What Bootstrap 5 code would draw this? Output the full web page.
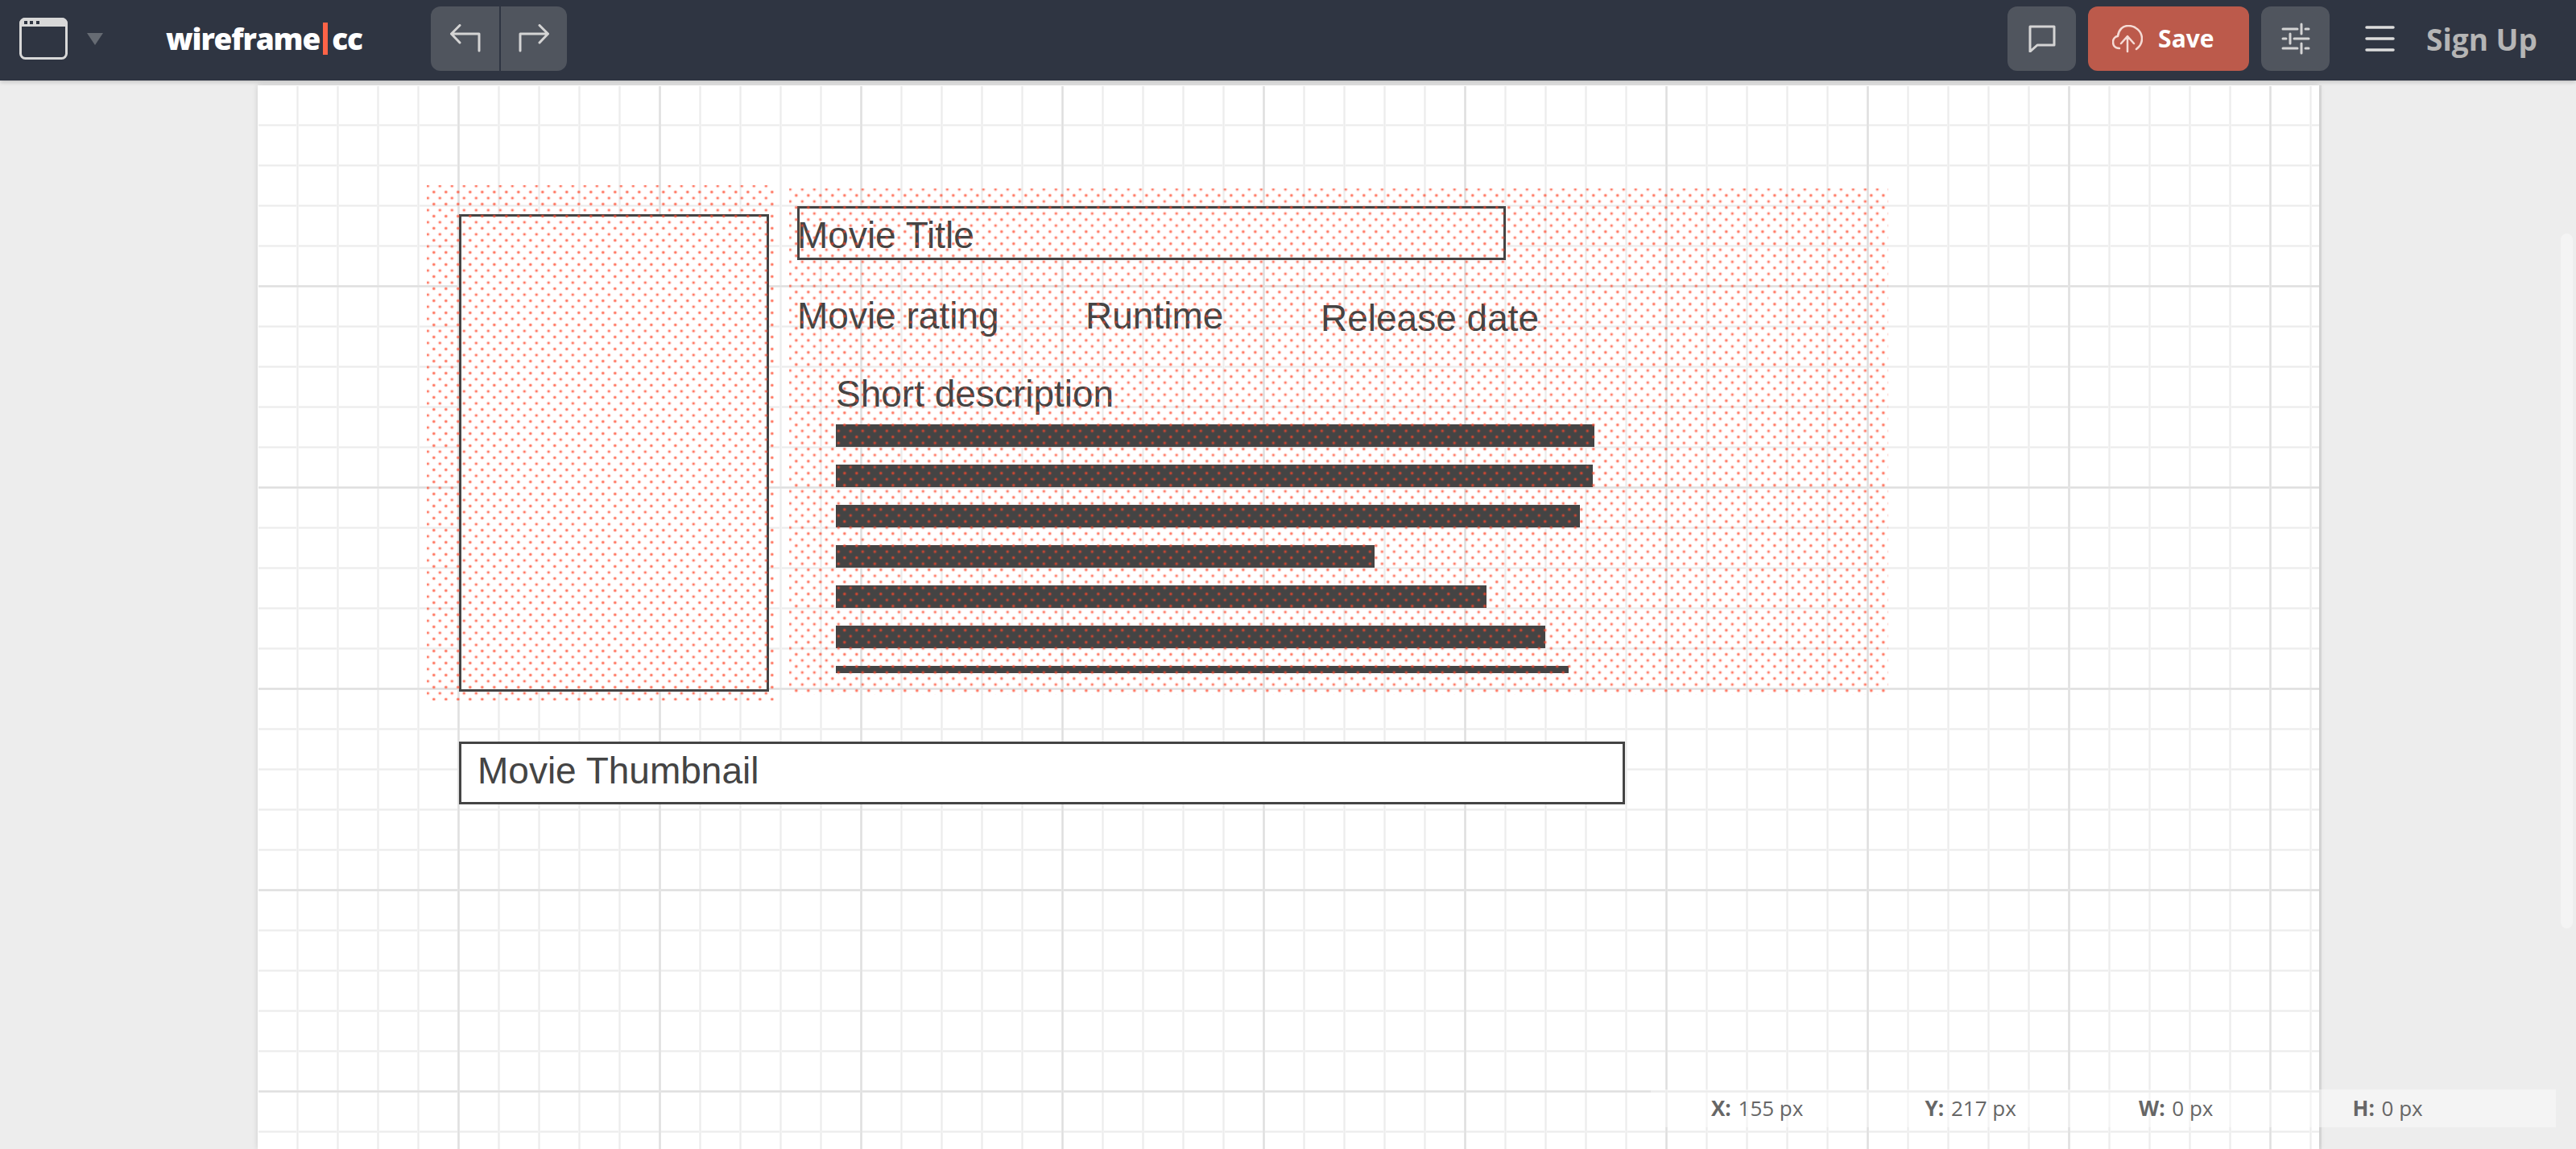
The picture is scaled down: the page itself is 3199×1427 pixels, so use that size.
<!doctype html>
<html lang="en">
<head>
<meta charset="utf-8">
<title>wireframe.cc</title>
<link href="https://cdn.jsdelivr.net/npm/bootstrap@5.3.0/dist/css/bootstrap.min.css" rel="stylesheet">
<style>
html,body{height:100%;overflow:hidden}
body{background:#ededed;font-family:"Open Sans",sans-serif;position:relative}
.topbar{height:100px;background:#2f3542;padding:0 48px 4px 24px;box-shadow:0 2px 5px rgba(0,0,0,.18);position:relative;z-index:3}
.win-icon{width:60px;height:52px;display:block}
.caret-tri{width:0;height:0;border-left:10px solid transparent;border-right:10px solid transparent;border-top:15px solid #666b73;margin-left:24px}
.logo{font-family:"Open Sans",sans-serif;font-weight:800;font-size:37px;line-height:40px;color:#fff;margin-left:78px;width:329px;letter-spacing:-1.15px;display:flex;align-items:center}
.logo-bar{display:inline-block;width:6px;height:40px;background:#ff6347;margin:0 5px 0 4px}
.tbtn{height:80px;width:85px;padding:0;border:0;border-radius:12px;background:#50555e;display:flex;align-items:center;justify-content:center}
.tbtn:hover{background:#50555e}
.undo-group{gap:3px}
.undo-group .tbtn:first-child{border-radius:12px 0 0 12px}
.undo-group .tbtn:last-child{border-radius:0 12px 12px 0;width:82px;margin-left:0}
.right-tools{gap:15px}
.save-btn{width:200px;height:80px;padding:0 0 0 30px;border:0;border-radius:12px;background:#bc5a4b;color:#fff;font-weight:700;font-size:30px;line-height:1;display:flex;align-items:center;gap:19px;justify-content:flex-start}
.save-btn:hover{background:#bc5a4b;color:#fff}
.burger{margin-left:29px;width:37px;height:32px;display:block}
.signup{margin-left:24px;color:#b5b5b5;font-weight:700;font-size:37px;line-height:1}
.icon-line{fill:none;stroke:#d4d4d4;stroke-width:3;stroke-linecap:round;stroke-linejoin:round}
.stage{height:1327px;position:relative}
.paper{position:absolute;left:320px;top:6px;width:2560px;height:1321px;background:#fff;box-shadow:0 0 7px rgba(0,0,0,.14),3px 0 0 #dedede;overflow:hidden}
.paper-grid{position:absolute;left:1px;top:1px;right:0;bottom:0;background-image:
 linear-gradient(to right,#e6e6e6 0 1px,#dfdfdf 1px 2px,#e6e6e6 2px 3px,transparent 3px),
 linear-gradient(to bottom,#e6e6e6 0 1px,#dfdfdf 1px 2px,#e6e6e6 2px 3px,transparent 3px),
 linear-gradient(to right,#f3f3f3 0 1px,#ececec 1px 2px,#f3f3f3 2px 3px,transparent 3px),
 linear-gradient(to bottom,#f3f3f3 0 1px,#ececec 1px 2px,#f3f3f3 2px 3px,transparent 3px);
 background-size:250px 100%,100% 250px,50px 100%,100% 50px;
 background-position:247px 0,0 247px,47px 0,0 47px}
.wf{position:absolute;color:#444;font-family:"Liberation Sans",Arial,sans-serif;font-size:46px;line-height:1;white-space:nowrap}
.wf-box{background:#fff;border:3px solid #444}
.poster{left:250px;top:160px;width:385px;height:593px}
.title-box{left:670px;top:150px;width:880px;height:67px}
.thumb-box{left:250px;top:815px;width:1448px;height:78px;padding:10px 0 0 20px}
.t-title{left:670px;top:163px}
.t-rating{left:670px;top:263px}
.t-runtime{left:1028px;top:263px}
.t-release{left:1320px;top:266px}
.t-short{left:718px;top:360px}
.text-bars{position:absolute;left:718px;top:421px;height:309px;overflow:hidden;display:flex;flex-direction:column;gap:22px}
.text-bar{height:28px;background:#444;flex:none}
.dots{position:absolute;pointer-events:none;
 background-image:radial-gradient(circle at 4px 4px,rgba(255,72,44,.75) 0,rgba(255,72,44,.75) 1.1px,rgba(255,72,44,.22) 1.7px,rgba(255,72,44,.1) 2.4px,transparent 2.8px),radial-gradient(circle at 11.5px 11.5px,rgba(255,72,44,.75) 0,rgba(255,72,44,.75) 1.1px,rgba(255,72,44,.22) 1.7px,rgba(255,72,44,.1) 2.4px,transparent 2.8px);
 background-size:15px 15px}
.dots-a{left:210px;top:124px;width:431px;height:640px;background-position:-2.7px -3px}
.dots-b{left:660px;top:128px;width:1365px;height:629px;background-position:-2.7px -2.8px}
.statusbar{position:absolute;left:2050px;top:1253px;width:1124px;height:47px;background:rgba(255,255,255,.42);z-index:2;padding-left:75px;color:#666;font-size:26px;line-height:47px}
.status-cell{width:265.5px;flex:none;white-space:nowrap;font-weight:400}
.status-cell b{font-weight:700;color:#666;margin-right:2px}
.thumb-scroll{position:absolute;left:3180px;top:190px;width:15px;height:863px;border-radius:8px;background:#f4f4f4}
</style>
</head>
<body>
<nav class="navbar topbar d-flex align-items-center justify-content-between flex-nowrap">
  <div class="d-flex align-items-center">
    <svg class="win-icon" viewBox="0 0 60 52"><rect x="1.5" y="1.5" width="57" height="49" rx="6" fill="none" stroke="#d8d8d8" stroke-width="3"/><path d="M7 0H53a7 7 0 0 1 7 7V11H0V7a7 7 0 0 1 7-7Z" fill="#d8d8d8"/><rect x="6" y="4" width="4" height="4" fill="#2f3542"/><rect x="13" y="4" width="4" height="4" fill="#2f3542"/><rect x="21" y="4" width="4" height="4" fill="#2f3542"/></svg>
    <span class="caret-tri"></span>
    <a class="logo text-decoration-none"><span>wireframe</span><span class="logo-bar"></span><span>cc</span></a>
    <div class="btn-group undo-group" role="group">
      <button class="btn tbtn" type="button" aria-label="Undo"><svg width="38" height="36" viewBox="0 0 38 36"><path class="icon-line" d="M12 1.500 L1.500 12 L12 23 M1.500 12 H36 V33"/></svg></button>
      <button class="btn tbtn" type="button" aria-label="Redo"><svg width="38" height="36" viewBox="0 0 38 36"><path class="icon-line" d="M26 1.500 L36.500 12 L26 23 M36.500 12 H2 V33"/></svg></button>
    </div>
  </div>
  <div class="d-flex align-items-center right-tools">
    <button class="btn tbtn" type="button" aria-label="Comment"><svg width="34" height="34" viewBox="0 0 34 34"><path class="icon-line" d="M2 2 H32 V25 H11 L2 33 Z"/></svg></button>
    <button class="btn save-btn" type="button"><svg width="38" height="35" viewBox="0 0 38 35"><path fill="none" stroke="#f5dbd5" stroke-width="2.500" stroke-linecap="round" stroke-linejoin="round" d="M9 29C3 29 1 25 1 21C1 17 4 14 7 14C8 6 13 1 20 1C29 1 37 8 37 17C37 23 34 27 30 30M19 33V15M11 23L19 14L27 23"/></svg><span>Save</span></button>
    <button class="btn tbtn" type="button" aria-label="Settings"><svg width="36" height="40" viewBox="0 0 36 40"><path class="icon-line" stroke="#e0e0e0" d="M2 8H20M30 8H34M25 2V14M2 20H6M16 20H34M11 14V26M2 32H20M30 32H34M25 26V38"/></svg></button>
    <svg class="burger" viewBox="0 0 37 32"><path fill="none" stroke="#ddd" stroke-width="3.500" stroke-linecap="round" d="M2 2H35M2 16H35M2 30H35"/></svg>
    <span class="signup">Sign Up</span>
  </div>
</nav>
<main class="stage">
  <section class="paper">
    <div class="paper-grid"></div>
    <div class="wf wf-box poster"></div>
    <div class="wf wf-box title-box"></div>
    <div class="wf t-title">Movie Title</div>
    <div class="wf t-rating">Movie rating</div>
    <div class="wf t-runtime">Runtime</div>
    <div class="wf t-release">Release date</div>
    <div class="wf t-short">Short description</div>
    <div class="text-bars">
      <div class="text-bar" style="width:942px"></div>
      <div class="text-bar" style="width:940px"></div>
      <div class="text-bar" style="width:924px"></div>
      <div class="text-bar" style="width:669px"></div>
      <div class="text-bar" style="width:808px"></div>
      <div class="text-bar" style="width:881px"></div>
      <div class="text-bar" style="width:910px"></div>
    </div>
    <div class="dots dots-a"></div>
    <div class="dots dots-b"></div>
    <div class="wf wf-box thumb-box">Movie Thumbnail</div>
  </section>
  <div class="statusbar d-flex">
    <div class="status-cell"><b>X:</b> 155 px</div>
    <div class="status-cell"><b>Y:</b> 217 px</div>
    <div class="status-cell"><b>W:</b> 0 px</div>
    <div class="status-cell"><b>H:</b> 0 px</div>
  </div>
  <div class="thumb-scroll"></div>
</main>
<script src="https://cdn.jsdelivr.net/npm/bootstrap@5.3.0/dist/js/bootstrap.bundle.min.js"></script>
</body>
</html>
